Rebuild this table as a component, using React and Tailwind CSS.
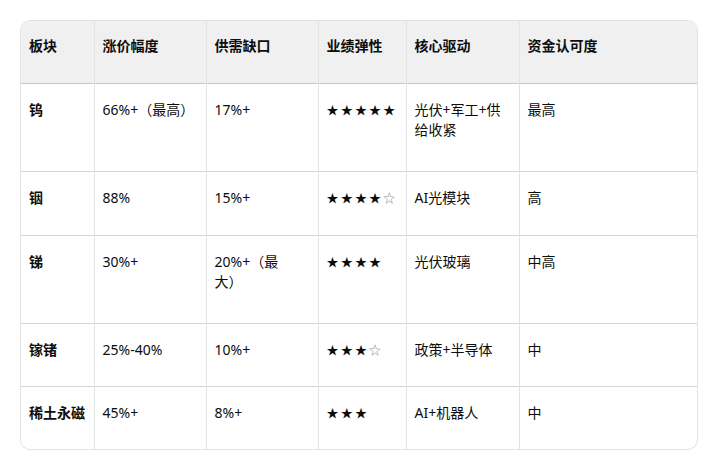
import React from 'react';

const headers = ['板块', '涨价幅度', '供需缺口', '业绩弹性', '核心驱动', '资金认可度'];

const rows = [
  { h: 'h-[88px]', cells: ['钨', '66%+（最高）', '17%+', '★★★★★', '光伏+军工+供给收紧', '最高'] },
  { h: 'h-[64px]', cells: ['铟', '88%', '15%+', '★★★★☆', 'AI光模块', '高'] },
  { h: 'h-[88px]', cells: ['锑', '30%+', '20%+（最\n大）', '★★★★', '光伏玻璃', '中高'] },
  { h: 'h-[63px]', cells: ['镓锗', '25%-40%', '10%+', '★★★☆', '政策+半导体', '中'] },
  { h: 'h-[63px]', cells: ['稀土永磁', '45%+', '8%+', '★★★', 'AI+机器人', '中'] },
];

const widths = ['w-[73px]', 'w-[112px]', 'w-[112px]', 'w-[88px]', 'w-[113px]', 'w-auto'];

const Stars = ({ value }) => {
  const full = value.replace('☆', '');
  return (
    <span className="font-['Noto_Sans_CJK_SC',sans-serif] text-[12px] tracking-[2.2px]">
      {full}
      {value.includes('☆') && <span className="text-[#8a8a8a]">☆</span>}
    </span>
  );
};

const App = () => {
  return (
    <div className="bg-white w-[719px] h-[471px] pt-[20px] pl-[20px] pr-[21px] font-['Noto_Sans','Noto_Sans_CJK_SC',sans-serif] text-[14px] leading-5 text-[#0d0d0d]">
      <div className="border border-[#e3e3e3] rounded-[10px] overflow-hidden">
        <table className="w-full border-collapse table-fixed">
          <thead>
            <tr className="bg-[#f0f0f0] h-[62px] border-b border-[#c9c9c9]">
              {headers.map((t, i) => (
                <th
                  key={t}
                  className={`${widths[i]} text-left align-top font-semibold px-2 pt-[15px] ${i < 5 ? 'border-r border-[#e3e3e3]' : ''}`}
                >
                  {t}
                </th>
              ))}
            </tr>
          </thead>
          <tbody>
            {rows.map((r, ri) => (
              <tr key={ri} className={`${r.h} ${ri < 4 ? 'border-b border-[#d6d6d6]' : ''}`}>
                {r.cells.map((c, ci) => (
                  <td
                    key={ci}
                    className={`align-top px-2 pt-[16px] whitespace-pre-line ${ci === 0 ? 'font-semibold' : ''} ${ci < 5 ? 'border-r border-[#e3e3e3]' : ''}`}
                  >
                    {ci === 3 ? <Stars value={c} /> : c}
                  </td>
                ))}
              </tr>
            ))}
          </tbody>
        </table>
      </div>
    </div>
  );
};

export default App;
